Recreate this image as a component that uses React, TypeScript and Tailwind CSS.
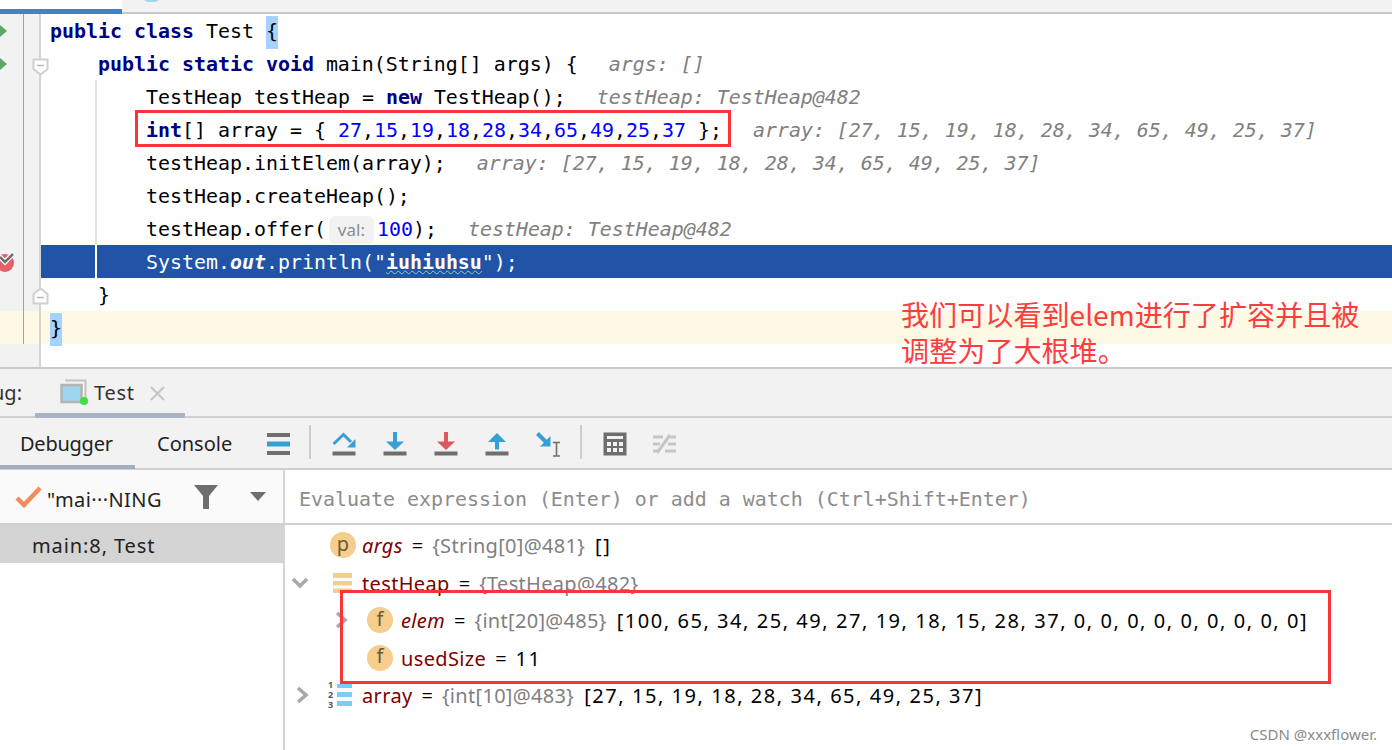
const mono = "font-['DejaVu_Sans_Mono',monospace] text-[19.93px]";
const ui = "font-['Noto_Sans',sans-serif] text-[20px]";

const K = ({ children }: { children: React.ReactNode }) => <span className="font-bold text-[#000080]">{children}</span>;
const N = ({ children }: { children: React.ReactNode }) => <span className="text-[#0000ff]">{children}</span>;
const Hint = ({ children }: { children: React.ReactNode }) => <span className="ml-[7px] italic text-[#808080]">{children}</span>;
const Brace = ({ children }: { children: React.ReactNode }) => <span className="bg-[#a6d2ff] pb-[6px] pt-[4px]">{children}</span>;

// Filas del editor
function Row({ children, guide, bg = "", gutter, icon }: { children?: React.ReactNode; guide?: boolean; bg?: string; gutter?: string; icon?: React.ReactNode }) {
  return (
    <div className={`flex h-[33px] items-center whitespace-pre ${bg}`}>
      <div className={`relative flex h-full w-[41px] shrink-0 border-r-2 border-[#d4d4d4] ${gutter ?? "bg-[#f2f2f2]"}`}>
        <div className="h-full w-[24px] border-r border-[#93a3bd]" />
        {icon}
      </div>
      {guide ? (
        <>
          <div className={`h-full w-[56px] shrink-0 border-r-2 ${bg.includes("2154a6") ? "border-white" : "border-[#e4e4e4]"}`} />
          <div className="pl-[49px] pt-[2px]">{children}</div>
        </>
      ) : (
        <div className="pl-[9px] pt-[2px]">{children}</div>
      )}
    </div>
  );
}

const RunArrow = () => (
  <svg className="absolute left-0 top-[11px]" width="8" height="12" viewBox="0 0 8 12">
    <path d="M0 0 L7 6 L0 12 Z" fill="#59a869" />
  </svg>
);

const Fold = ({ up }: { up?: boolean }) => (
  <svg className={`absolute left-[32px] ${up ? "top-[9px]" : "top-[11px]"}`} width="17" height="18" viewBox="0 0 17 18">
    <path d={up ? "M1.5 16.5 H15.5 V7 L8.5 1.5 L1.5 7 Z" : "M1.5 1.5 H15.5 V11 L8.5 16.5 L1.5 11 Z"} fill="#fff" stroke="#d0d0d0" strokeWidth="2" />
    <path d={up ? "M5 10.5 H12" : "M5 7.5 H12"} stroke="#b8b8b8" strokeWidth="1.5" />
  </svg>
);

const Breakpoint = () => (
  <svg className="absolute left-0 top-[6px]" width="16" height="22" viewBox="0 0 16 22">
    <circle cx="5" cy="12" r="9" fill="#e5606a" />
    <path d="M-1 5 L5 11 L13.5 2" fill="none" stroke="#fff" strokeWidth="5" />
    <path d="M0 6 L5 11 L13 3" fill="none" stroke="#6e6e6e" strokeWidth="2.5" />
  </svg>
);

const Base = () => <rect x="0.5" y="19.5" width="23" height="4" fill="#6e6e6e" />;

const StepOver = () => (
  <svg width="24" height="24" viewBox="0 0 24 24">
    <path d="M1.5 12 L11.5 2.5 L19 10" fill="none" stroke="#389fd6" strokeWidth="3" />
    <path d="M23.5 7 V15.5 H15 Z" fill="#389fd6" />
    <Base />
  </svg>
);
const StepDown = ({ color }: { color: string }) => (
  <svg width="24" height="24" viewBox="0 0 24 24">
    <rect x="10" y="0" width="4" height="10" fill={color} />
    <path d="M3 9.5 H21 L12 18 Z" fill={color} />
    <Base />
  </svg>
);
const StepOut = () => (
  <svg width="24" height="24" viewBox="0 0 24 24">
    <path d="M3 10 H21 L12 1 Z" fill="#389fd6" />
    <rect x="10" y="10" width="4" height="7.5" fill="#389fd6" />
    <Base />
  </svg>
);
const RunToCursor = () => (
  <svg width="28" height="27" viewBox="0 0 28 27">
    <path d="M1.5 1.5 L11 11" stroke="#389fd6" strokeWidth="4" />
    <path d="M14.5 4 V14.5 H4 Z" fill="#389fd6" />
    <path d="M17 10.5 H24 M20.5 10.5 V24 M17 24 H24" stroke="#6e6e6e" strokeWidth="1.6" fill="none" />
  </svg>
);
const Calc = () => (
  <svg width="24" height="24" viewBox="0 0 24 24">
    <rect x="0.5" y="0.5" width="23" height="23" fill="#6e6e6e" />
    <rect x="4" y="4" width="16" height="3" fill="#f2f2f2" />
    {[4, 10, 16].flatMap((x) => [10, 16].map((y) => <rect key={`${x}-${y}`} x={x} y={y} width="4" height="4" fill="#f2f2f2" />))}
  </svg>
);
const Trace = () => (
  <svg width="24" height="22" viewBox="0 0 24 22">
    <path d="M0 4 H10 M15 4 H23 M0 11 H7 M15 11 H23 M0 18 H5 M12 18 H23 M4 20 L17 2" stroke="#c6c6c6" strokeWidth="3" fill="none" />
  </svg>
);

const ListIcon = () => (
  <svg width="23" height="22" viewBox="0 0 23 22">
    <rect y="0" width="23" height="4" fill="#6e6e6e" />
    <rect y="8.5" width="23" height="5" fill="#389fd6" />
    <rect y="18" width="23" height="4" fill="#6e6e6e" />
  </svg>
);

const Chevron = ({ down, className = "" }: { down?: boolean; className?: string }) => (
  <svg className={className} width="18" height="18" viewBox="0 0 18 18">
    <path d={down ? "M2 5 L9 12 L16 5" : "M5 2 L13 9 L5 16"} fill="none" stroke="#a8a8a8" strokeWidth="3.5" />
  </svg>
);

const Badge = ({ letter }: { letter: string }) => (
  <div className="flex h-[26px] w-[26px] shrink-0 items-center justify-center rounded-full bg-[#f5cd8c] pb-[3px] text-[#6b5b3a]">{letter}</div>
);

const VarName = ({ children, italic }: { children: React.ReactNode; italic?: boolean }) => (
  <span className={`tracking-[0.35px] text-[#7f0000] ${italic ? "italic" : ""}`}>{children}</span>
);
const Ref = ({ children }: { children: React.ReactNode }) => <span className="tracking-[0.3px] text-[#808080]">{children}</span>;
const Eq = () => <span className="mx-[9px]">=</span>;
const Val = ({ children }: { children: React.ReactNode }) => <span className="ml-[10px] tracking-[1.55px]">{children}</span>;

function VarRow({ left, children }: { left: React.ReactNode; children: React.ReactNode }) {
  return <div className="flex h-[37.5px] items-center whitespace-pre pt-[3px]">{left}<div className="pt-[2px]">{children}</div></div>;
}

export default function App() {
  return (
    <div className="relative h-[750px] w-[1392px] overflow-hidden bg-white text-black">
      {/* pestañas superiores */}
      <div className="flex h-[14px] border-b-2 border-[#c8c8c8] bg-[#f2f2f2]">
        <div className="h-[14px] w-[122px] border-b-[5px] border-[#4083c9] bg-white" />
        <div className="ml-[21px] -mt-[10px] h-[12px] w-[17px] rounded-full bg-[#9fd6ef]" />
      </div>

      {/* editor */}
      <div className={`h-[353px] ${mono}`}>
        <Row icon={<RunArrow />}>
          <K>public class </K>Test <Brace>{"{"}</Brace>
        </Row>
        <Row icon={<><RunArrow /><Fold /></>}>
          {"    "}<K>public static void </K>main(String[] args) {"{"}{"  "}<Hint>args: []</Hint>
        </Row>
        <Row guide>TestHeap testHeap = <K>new </K>TestHeap();{"  "}<Hint>testHeap: TestHeap@482</Hint></Row>
        <Row guide>
          <K>int</K>[] array = {"{ "}<N>27</N>,<N>15</N>,<N>19</N>,<N>18</N>,<N>28</N>,<N>34</N>,<N>65</N>,<N>49</N>,<N>25</N>,<N>37</N>{" };"}{"  "}<Hint>array: [27, 15, 19, 18, 28, 34, 65, 49, 25, 37]</Hint>
        </Row>
        <Row guide>testHeap.initElem(array);{"  "}<Hint>array: [27, 15, 19, 18, 28, 34, 65, 49, 25, 37]</Hint></Row>
        <Row guide>testHeap.createHeap();</Row>
        <Row guide>
          <span className="inline-flex items-center">
            testHeap.offer(
            <span className="ml-[3px] mr-[3px] flex h-[28px] w-[45px] items-center justify-center rounded-[6px] bg-[#f2f2f2] font-['Noto_Sans',sans-serif] text-[17px] text-[#8c8c8c]">val:</span>
            <N>100</N>);{"  "}<Hint>testHeap: TestHeap@482</Hint>
          </span>
        </Row>
        <Row guide bg="bg-[#2154a6] text-white" icon={<Breakpoint />}>
          System.<span className="font-bold italic">out</span>.println("<span className="font-bold underline decoration-wavy decoration-[#b5c98a] decoration-1">iuhiuhsu</span>");
        </Row>
        <Row icon={<Fold up />}>{"    }"}</Row>
        <Row bg="bg-[#fdf9e5]" gutter="bg-[#fdf9e5]">
          <Brace>{"}"}</Brace>
        </Row>
        <div className="flex h-[23px] w-[41px] border-r-2 border-[#d4d4d4] bg-[#f2f2f2]" />
      </div>

      {/* panel de depuración */}
      <div className={`h-[383px] border-t-2 border-[#c8c8c8] bg-[#f2f2f2] ${ui}`}>
        <div className="flex h-[49px] border-b-2 border-[#cfcfcf]">
          <div className="flex h-full w-[22px] justify-end overflow-hidden pt-[9px] text-[#333]">
            <span>Debug:</span>
          </div>
          <div className="ml-[13px] flex h-[49px] w-[150px] items-start rounded-b-[2px] border-b-[5px] border-[#aab3c5] pl-[25px] pt-[9px]">
            <svg className="mt-[1px] shrink-0" width="28" height="26" viewBox="0 0 28 26">
              <path d="M5 1.5 H25.5 V19" fill="none" stroke="#c2c2c2" strokeWidth="2" />
              <rect x="1.5" y="6" width="20" height="17" fill="#9fd6ef" stroke="#b4b4b4" strokeWidth="2.5" />
              <circle cx="24" cy="22" r="4" fill="#3de03d" />
            </svg>
            <span className="ml-[6px] tracking-[0.7px] text-[#333]">Test</span>
            <svg className="ml-[15px] mt-[8px] shrink-0" width="15" height="15" viewBox="0 0 15 15">
              <path d="M1 1 L14 14 M14 1 L1 14" stroke="#c4c4c4" strokeWidth="2" />
            </svg>
          </div>
        </div>

        <div className="flex h-[52px] items-start border-b-2 border-[#cfcfcf]">
          <div className="h-[51px] w-[135px] shrink-0 border-b-[4px] border-[#a3aebf] pl-[20px] pt-[11px] tracking-[-0.25px] text-[#222]">Debugger</div>
          <div className="w-[132px] shrink-0 pl-[22px] pt-[11px] text-[#222]">Console</div>
          <div className="mt-[15px] w-[23px] shrink-0"><ListIcon /></div>
          <div className="ml-[19px] mt-[7px] h-[34px] w-[2px] shrink-0 bg-[#cdcdcd]" />
          <div className="ml-[21px] mt-[14px] w-[51px] shrink-0"><StepOver /></div>
          <div className="mt-[14px] w-[51px] shrink-0"><StepDown color="#389fd6" /></div>
          <div className="mt-[14px] w-[51px] shrink-0"><StepDown color="#db5860" /></div>
          <div className="mt-[14px] w-[51px] shrink-0"><StepOut /></div>
          <div className="mt-[14px] w-[44px] shrink-0"><RunToCursor /></div>
          <div className="mt-[7px] h-[34px] w-[2px] shrink-0 bg-[#cdcdcd]" />
          <div className="ml-[21px] mt-[14px] w-[50px] shrink-0"><Calc /></div>
          <div className="mt-[15px] w-[24px] shrink-0"><Trace /></div>
        </div>

        <div className="flex h-[280px]">
          {/* marcos */}
          <div className="w-[285px] shrink-0 border-r-2 border-[#d4d4d4] bg-white">
            <div className="flex h-[55px] items-center border-b-2 border-[#d0d0d0] bg-[#fafafa]">
              <svg className="ml-[15px] shrink-0" width="27" height="22" viewBox="0 0 27 22">
                <path d="M2 12 L9 19 L25 2" fill="none" stroke="#f58a5e" strokeWidth="4.5" />
              </svg>
              <span className="ml-[5px] w-[147px] shrink-0 pt-[6px] tracking-[0.4px] text-[#222]">"mai···NING</span>
              <svg className="shrink-0" width="24" height="24" viewBox="0 0 24 24">
                <path d="M0 0 H24 L15 11 V24 H9 V11 Z" fill="#6e6e6e" />
              </svg>
              <svg className="ml-[32px] shrink-0" width="16" height="9" viewBox="0 0 16 9">
                <path d="M0 0 H16 L8 9 Z" fill="#6e6e6e" />
              </svg>
            </div>
            <div className="flex h-[38px] items-center bg-[#d4d4d4] pl-[32px] pt-[3px] tracking-[0.9px] text-[#222]">main:8, Test</div>
          </div>

          {/* variables */}
          <div className="min-w-0 flex-1 bg-white">
            <div className={`flex h-[55px] items-center border-b-2 border-[#d0d0d0] bg-white pl-[14px] pt-[7px] text-[#8c8c8c] ${mono}`}>
              Evaluate expression (Enter) or add a watch (Ctrl+Shift+Enter)
            </div>
            <VarRow left={<div className="ml-[45px] mr-[6px]"><Badge letter="p" /></div>}>
              <VarName italic>args</VarName><Eq /><Ref>{"{String[0]@481}"}</Ref><Val>[]</Val>
            </VarRow>
            <VarRow left={
              <div className="flex w-[77px] shrink-0 items-center">
                <Chevron down className="ml-[6px] shrink-0" />
                <svg className="ml-[24px] shrink-0" width="19" height="20" viewBox="0 0 19 20">
                  <rect y="0" width="19" height="5" fill="#f5cd8c" /><rect y="8" width="19" height="4.5" fill="#f5cd8c" /><rect y="15.5" width="19" height="4.5" fill="#f5cd8c" />
                </svg>
              </div>
            }>
              <VarName>testHeap</VarName><Eq /><Ref>{"{TestHeap@482}"}</Ref>
            </VarRow>
            <VarRow left={
              <div className="flex w-[116px] shrink-0 items-center">
                <Chevron className="ml-[47px] shrink-0" />
                <div className="ml-[17px]"><Badge letter="f" /></div>
              </div>
            }>
              <VarName italic>elem</VarName><Eq /><Ref>{"{int[20]@485}"}</Ref><Val>[100, 65, 34, 25, 49, 27, 19, 18, 15, 28, 37, 0, 0, 0, 0, 0, 0, 0, 0, 0]</Val>
            </VarRow>
            <VarRow left={<div className="ml-[82px] mr-[8px]"><Badge letter="f" /></div>}>
              <VarName>usedSize</VarName><Eq /><span className="tracking-[1.5px]">11</span>
            </VarRow>
            <VarRow left={
              <div className="flex w-[77px] shrink-0 items-center">
                <Chevron className="ml-[8px] shrink-0" />
                <div className="ml-[17px] flex w-[9px] flex-col text-[9px] font-bold leading-[10px] text-[#555]"><span>1</span><span>2</span><span>3</span></div>
                <svg className="shrink-0" width="15" height="22" viewBox="0 0 15 22">
                  <rect y="0" width="15" height="4" fill="#7ccdee" /><rect y="8" width="15" height="5" fill="#7ccdee" /><rect y="17" width="15" height="5" fill="#7ccdee" />
                </svg>
              </div>
            }>
              <VarName>array</VarName><Eq /><Ref>{"{int[10]@483}"}</Ref><Val>[27, 15, 19, 18, 28, 34, 65, 49, 25, 37]</Val>
            </VarRow>
          </div>
        </div>
      </div>

      {/* anotaciones sobre la captura */}
      <div className="absolute left-[135px] top-[110px] h-[37px] w-[596px] border-[3px] border-[#fc3438]" />
      <div className="absolute left-[340px] top-[590px] h-[94px] w-[991px] border-[3px] border-[#fc3438]" />
      <div className="absolute left-[901px] top-[296px] w-[480px] font-['Noto_Sans_CJK_SC',sans-serif] text-[28.1px] leading-[35.5px] text-[#fc3d3d]">
        我们可以看到elem进行了扩容并且被<br />调整为了大根堆。
      </div>
      <div className="absolute bottom-[5px] right-[15px] font-['Noto_Sans',sans-serif] text-[15px] text-[#8a8a8a]">CSDN @xxxflower.</div>
    </div>
  );
}
